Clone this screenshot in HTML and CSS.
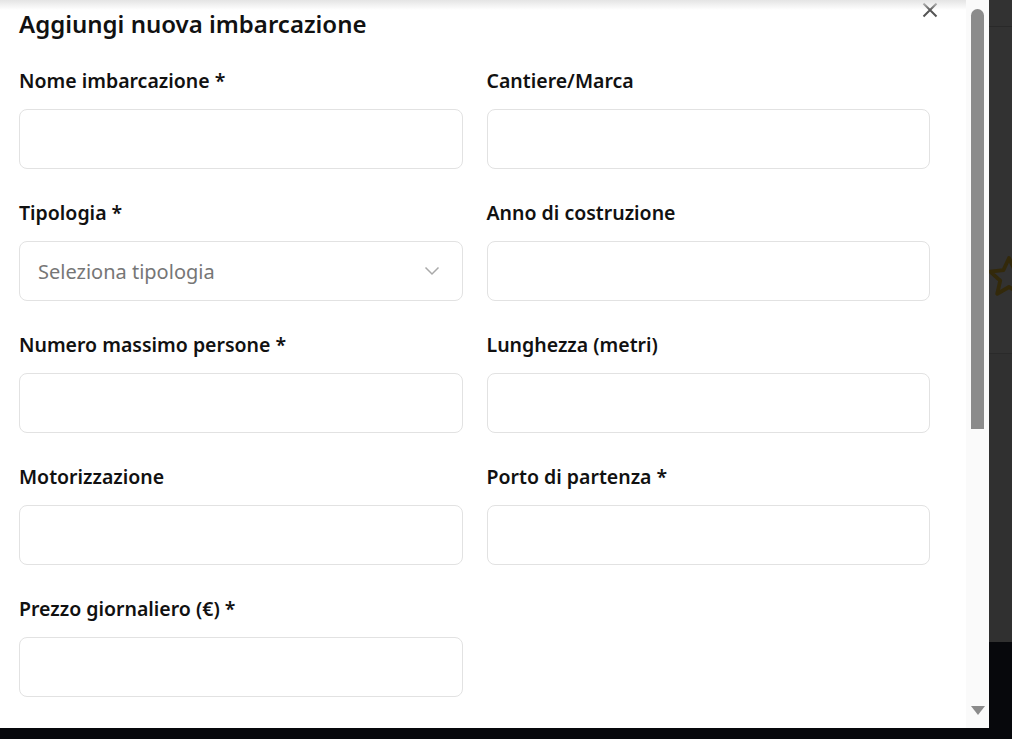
FILE: index.html
```html
<!DOCTYPE html>
<html lang="it">
<head>
<meta charset="utf-8">
<title>Aggiungi nuova imbarcazione</title>
<link rel="stylesheet" href="styles.css">
</head>
<body>
<div class="screen">
  <div class="modal">
    <div class="modal-body">
      <h2 class="title">Aggiungi nuova imbarcazione</h2>
      <form class="form">
        <div class="field">
          <label class="label">Nome imbarcazione *</label>
          <input class="input" type="text">
        </div>
        <div class="field">
          <label class="label">Cantiere/Marca</label>
          <input class="input" type="text">
        </div>
        <div class="field">
          <label class="label">Tipologia *</label>
          <div class="select">
            <span class="placeholder">Seleziona tipologia</span>
            <svg class="chevron" width="16" height="10" viewBox="0 0 16 10"><path d="M1.5 1.5 L8 8 L14.5 1.5" fill="none" stroke="#a9a9a9" stroke-width="1.5"/></svg>
          </div>
        </div>
        <div class="field">
          <label class="label">Anno di costruzione</label>
          <input class="input" type="text">
        </div>
        <div class="field">
          <label class="label">Numero massimo persone *</label>
          <input class="input" type="text">
        </div>
        <div class="field">
          <label class="label">Lunghezza (metri)</label>
          <input class="input" type="text">
        </div>
        <div class="field">
          <label class="label">Motorizzazione</label>
          <input class="input" type="text">
        </div>
        <div class="field">
          <label class="label">Porto di partenza *</label>
          <input class="input" type="text">
        </div>
        <div class="field">
          <label class="label">Prezzo giornaliero (€) *</label>
          <input class="input" type="text">
        </div>
      </form>
    </div>
    <button class="close" type="button" aria-label="Chiudi">
      <svg width="16" height="16" viewBox="0 0 16 16"><path d="M1.5 1.5 L14.5 14.5 M14.5 1.5 L1.5 14.5" stroke="#555" stroke-width="2" fill="none"/></svg>
    </button>
    <div class="top-shade"></div>
    <div class="scrollbar">
      <div class="thumb"></div>
      <svg class="arrow-down" width="14" height="10" viewBox="0 0 14 10"><path d="M0 0 H14 L7 9 Z" fill="#8b8b8b"/></svg>
    </div>
  </div>
  <div class="backdrop">
    <div class="bd-head"></div>
    <div class="bd-card">
      <svg class="star" width="48" height="48" viewBox="0 0 24 24"><path d="M12 2.5 L14.8 8.6 L21.4 9.3 L16.4 13.8 L17.9 20.4 L12 17 L6.1 20.4 L7.6 13.8 L2.6 9.3 L9.2 8.6 Z" fill="none" stroke="#33290a" stroke-width="1.9" stroke-linejoin="round"/></svg>
    </div>
    <div class="bd-rest"></div>
  </div>
</div>
</body>
</html>
```

FILE: styles.css
```css
* { box-sizing: border-box; }

html, body {
  margin: 0;
  padding: 0;
  background: #07080c;
  height: 739px;
  overflow: hidden;
}

body {
  font-family: "Noto Sans", "Open Sans", sans-serif;
  color: #111;
}

.screen {
  display: flex;
  align-items: flex-start;
  width: 1012px;
  height: 739px;
}

.modal {
  position: relative;
  width: 989px;
  height: 728px;
  background: #fff;
  flex: none;
  overflow: hidden;
}

.modal-body {
  padding: 8px 0 0 19px;
  width: 930px;
}

.title {
  margin: 0;
  font-size: 24px;
  line-height: 32px;
  font-weight: 600;
  color: #111;
}

.form {
  margin-top: 29px;
  display: grid;
  grid-template-columns: 1fr 1fr;
  column-gap: 24px;
  row-gap: 32px;
}

.field {
  display: flex;
  flex-direction: column;
  gap: 16px;
}

.label {
  font-size: 19.5px;
  line-height: 24px;
  font-weight: 600;
  color: #111;
}

.input,
.select {
  height: 60px;
  width: 100%;
  border: 1px solid #e2e2e2;
  border-radius: 8px;
  background: #fff;
  font: inherit;
}

.select {
  display: flex;
  align-items: center;
  justify-content: space-between;
  padding: 0 22px 0 18px;
}

.placeholder {
  font-size: 20px;
  color: #767676;
}

.chevron { display: block; }

.close {
  position: absolute;
  top: 2px;
  left: 922px;
  width: 16px;
  height: 16px;
  padding: 0;
  border: 0;
  background: none;
}

.close svg { display: block; }

.top-shade {
  position: absolute;
  left: 0;
  top: 0;
  width: 100%;
  height: 10px;
  background: linear-gradient(#e4e4e4, rgba(255,255,255,0));
  pointer-events: none;
}

.scrollbar {
  position: absolute;
  top: 0;
  right: 0;
  width: 23px;
  height: 728px;
  background: #fafafa;
}

.thumb {
  position: absolute;
  left: 5px;
  top: 9px;
  width: 13px;
  height: 420px;
  background: #8b8b8b;
  border-radius: 7px 7px 0 0;
}

.arrow-down {
  position: absolute;
  left: 5px;
  top: 706px;
}

.backdrop {
  flex: 1;
  height: 642px;
  display: flex;
  flex-direction: column;
  background: #313131;
  overflow: hidden;
}

.bd-head {
  height: 27px;
  flex: none;
  background: #323232;
  border-bottom: 1px solid #292929;
}

.bd-card {
  position: relative;
  height: 327px;
  flex: none;
  background: #323232;
  border-bottom: 1px solid #2a2a2a;
  overflow: hidden;
}

.star {
  position: absolute;
  left: -4px;
  top: 226px;
}

.bd-rest {
  flex: 1;
  background: #303030;
}
```
